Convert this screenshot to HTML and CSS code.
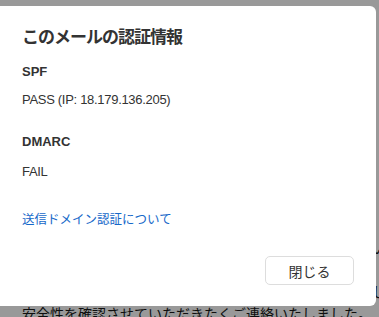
FILE: index.html
```html
<!DOCTYPE html>
<html lang="ja">
<head>
    <meta charset="UTF-8">
    <meta name="viewport" content="width=device-width, initial-scale=1.0">
    <title>メールの認証情報</title>
    <link rel="stylesheet" href="styles.css">
</head>
<body>

    <div class="mail-body">
        <p class="line">お客様のアカウントにて通常とは異なるログインを検知いたしました。ご確認ください</p>
        <p class="line">ご不明な点がございましたら</p>
        <p class="line">サポートまでお問い合わせください。よろしくお願い申し上げます。</p>
        <p class="line">安全性を確認させていただきたくご連絡いたしました。</p>
    </div>

    <div class="overlay">
        <div class="dialog">
            <h2 class="dialog-title">このメールの認証情報</h2>

            <div class="auth-item">
                <h3 class="auth-label">SPF</h3>
                <p class="auth-value">PASS (IP: 18.179.136.205)</p>
            </div>

            <div class="auth-item">
                <h3 class="auth-label">DMARC</h3>
                <p class="auth-value">FAIL</p>
            </div>

            <a class="help-link" href="#">送信ドメイン認証について</a>

            <div class="dialog-footer">
                <button class="close-button">閉じる</button>
            </div>
        </div>
    </div>

</body>
</html>
```

FILE: styles.css
```css
body {
    margin: 0;
    font-family: "Liberation Sans", "Noto Sans CJK JP", sans-serif;
    background-color: #fff;
    overflow: hidden;
}
.mail-body {
    padding: 237px 0 0 22px;
    width: 600px;
}
.line {
    margin: 0;
    font-size: 14px;
    line-height: 22px;
    color: #1a1a1a;
    white-space: nowrap;
}
.overlay {
    position: fixed;
    top: 0;
    left: 0;
    right: 0;
    bottom: 0;
    background-color: rgba(0, 0, 0, 0.4);
}
.dialog {
    position: absolute;
    top: 6px;
    left: -6px;
    width: 382px;
    height: 300px;
    box-sizing: border-box;
    padding: 20px 22px 21px 28px;
    background-color: #fff;
    border-radius: 6px;
    display: flex;
    flex-direction: column;
}
.dialog-title {
    margin: 0;
    font-size: 17px;
    line-height: 24px;
    font-weight: bold;
    letter-spacing: -1px;
    color: #333;
}
.auth-item {
    margin-top: 12px;
}
.auth-item + .auth-item {
    margin-top: 22px;
}
.auth-label {
    margin: 0;
    font-size: 13px;
    line-height: 20px;
    font-weight: bold;
    color: #333;
}
.auth-value {
    margin: 8px 0 0;
    font-size: 13px;
    line-height: 20px;
    color: #333;
    letter-spacing: -0.3px;
}
.auth-item + .auth-item .auth-value {
    margin-top: 10px;
}
.help-link {
    margin-top: 28px;
    font-size: 12.5px;
    line-height: 20px;
    color: #1668c9;
    text-decoration: none;
}
.dialog-footer {
    margin-top: auto;
    display: flex;
    justify-content: flex-end;
}
.close-button {
    width: 89px;
    height: 29px;
    padding: 0;
    font-family: inherit;
    font-size: 14px;
    color: #333;
    background-color: #fff;
    border: 1px solid #ddd;
    border-radius: 5px;
    cursor: pointer;
}
.close-button:hover {
    background-color: #f5f5f5;
}
```
